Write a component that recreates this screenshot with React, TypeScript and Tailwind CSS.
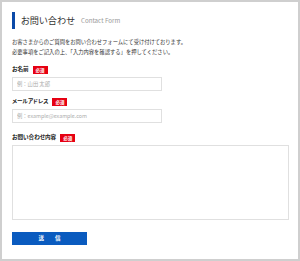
const font = {
  fontFamily: '"Noto Sans CJK JP", "Noto Sans", sans-serif',
};

const Required: React.FC = () => (
  <span className="ml-[4px] flex h-[8px] w-[15px] items-center justify-center bg-[#e60012] text-[4.5px] font-bold leading-none text-white">
    必須
  </span>
);

const Label: React.FC<{ text: string; className?: string }> = ({
  text,
  className,
}) => (
  <div className={"flex h-[8px] items-center " + (className ?? "")}>
    <span className="text-[5.6px] font-bold leading-none text-[#222] [font-feature-settings:'palt']">
      {text}
    </span>
    <Required />
  </div>
);

export default function App() {
  return (
    <div
      className="h-[261px] w-[300px] border-2 border-[#cfcfcf] bg-white px-[10px] pt-[10px]"
      style={font}
    >
      <div className="flex h-[17px] items-center">
        <div className="h-full w-[3px] bg-[#0b4aa8]" />
        <h1 className="ml-[6px] text-[9.2px] leading-none text-[#333] [font-feature-settings:'palt']">
          お問い合わせ
        </h1>
        <span className="ml-[6px] mt-[2px] text-[6.2px] leading-none text-[#999]">
          Contact Form
        </span>
      </div>

      <p className="mt-[8px] text-[5.3px] leading-[10px] text-[#333]">
        お客さまからのご質問をお問い合わせフォームにて受け付けております。
        <br />
        必要事項をご記入の上、「入力内容を確認する」を押してください。
      </p>

      <Label text="お名前" className="mt-[9px]" />
      <input
        type="text"
        placeholder="例：山田 太郎"
        className="mt-[3px] block h-[14px] w-[150px] border border-[#e0e0e0] px-[4px] text-[5.3px] outline-0 placeholder:text-[#aaa]"
      />

      <Label text="メールアドレス" className="mt-[7px]" />
      <input
        type="text"
        placeholder="例：example@example.com"
        className="mt-[3px] block h-[14px] w-[150px] border border-[#e0e0e0] px-[4px] text-[5.3px] outline-0 placeholder:text-[#aaa]"
      />

      <Label text="お問い合わせ内容" className="mt-[11px]" />
      <textarea className="mt-[3px] block h-[75px] w-[277px] resize-none border border-[#e0e0e0] outline-0" />

      <button className="mt-[12px] flex h-[13px] w-[75px] items-center justify-center bg-[#0a5bbf] text-[5.5px] font-bold leading-none text-white">
        送　　信
      </button>
    </div>
  );
}
